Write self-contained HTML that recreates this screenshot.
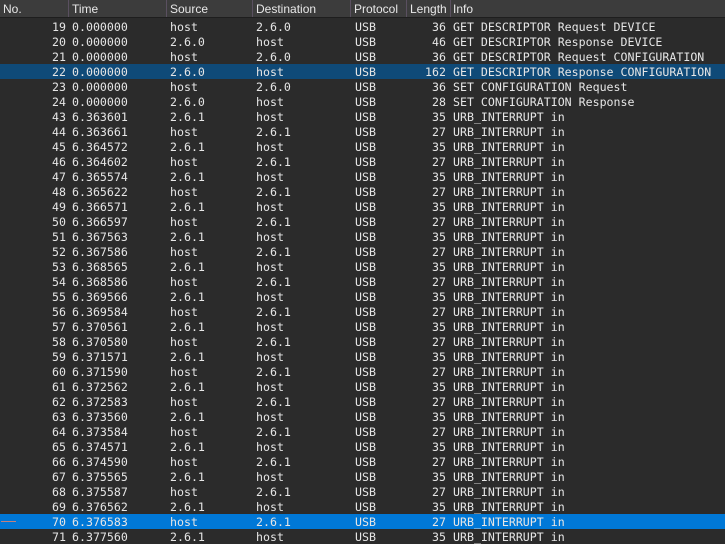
<!DOCTYPE html>
<html><head><meta charset="utf-8"><style>
body{margin:0;width:725px;height:544px;overflow:hidden;background:#2b2b2b;}
.h{position:absolute;left:0;top:0;width:725px;height:17px;background:#3c3c3c;border-bottom:1px solid #1e1e1e;font:12px "Liberation Sans",sans-serif;color:#e8e8e8;}
.h span{position:absolute;top:2px;}
.h i{position:absolute;top:0;width:1px;height:17px;background:#5a5060;}
.r{position:absolute;left:0;width:725px;height:15px;font:11.6px "DejaVu Sans Mono",monospace;color:#e6e6e6;white-space:pre;}
.r span{position:absolute;top:1px;}
.n{right:659px;}.t{left:72px}.s{left:170px}.d{left:256px}.p{left:355px}.l{right:279px}.f{left:453px}
.sel1{background:#0f4a78}.sel2{background:#0078d7}
</style></head><body>
<div class="h"><span style="left:3px">No.</span><i style="left:68px"></i><span style="left:72px">Time</span><i style="left:166px"></i><span style="left:170px">Source</span><i style="left:252px"></i><span style="left:256px">Destination</span><i style="left:350px"></i><span style="left:354px">Protocol</span><i style="left:406px"></i><span style="left:410px">Length</span><i style="left:450px"></i><span style="left:453px">Info</span></div>
<div id="c"></div>
<script>
var rows=[[19,"0.000000","host","2.6.0",36,"GET DESCRIPTOR Request DEVICE"],[20,"0.000000","2.6.0","host",46,"GET DESCRIPTOR Response DEVICE"],[21,"0.000000","host","2.6.0",36,"GET DESCRIPTOR Request CONFIGURATION"],[22,"0.000000","2.6.0","host",162,"GET DESCRIPTOR Response CONFIGURATION"],[23,"0.000000","host","2.6.0",36,"SET CONFIGURATION Request"],[24,"0.000000","2.6.0","host",28,"SET CONFIGURATION Response"]];
var ts=["6.363601","6.363661","6.364572","6.364602","6.365574","6.365622","6.366571","6.366597","6.367563","6.367586","6.368565","6.368586","6.369566","6.369584","6.370561","6.370580","6.371571","6.371590","6.372562","6.372583","6.373560","6.373584","6.374571","6.374590","6.375565","6.375587","6.376562","6.376583","6.377560"];
for(var i=0;i<ts.length;i++){var n=43+i;var o=n%2==1;rows.push([n,ts[i],o?"2.6.1":"host",o?"host":"2.6.1",o?35:27,"URB_INTERRUPT in"]);}
var h="";
rows.forEach(function(r,k){var c=r[0]==22?" sel1":r[0]==70?" sel2":"";
h+='<div class="r'+c+'" style="top:'+(19+k*15)+'px">'+(r[0]==70?'<div style="position:absolute;left:1px;top:7px;width:15px;height:1px;background:#c08080"></div>':'')+'<span class="n">'+r[0]+'</span><span class="t">'+r[1]+'</span><span class="s">'+r[2]+'</span><span class="d">'+r[3]+'</span><span class="p">USB</span><span class="l">'+r[4]+'</span><span class="f">'+r[5]+'</span></div>';});
document.getElementById("c").innerHTML=h;
</script>
</body></html>
